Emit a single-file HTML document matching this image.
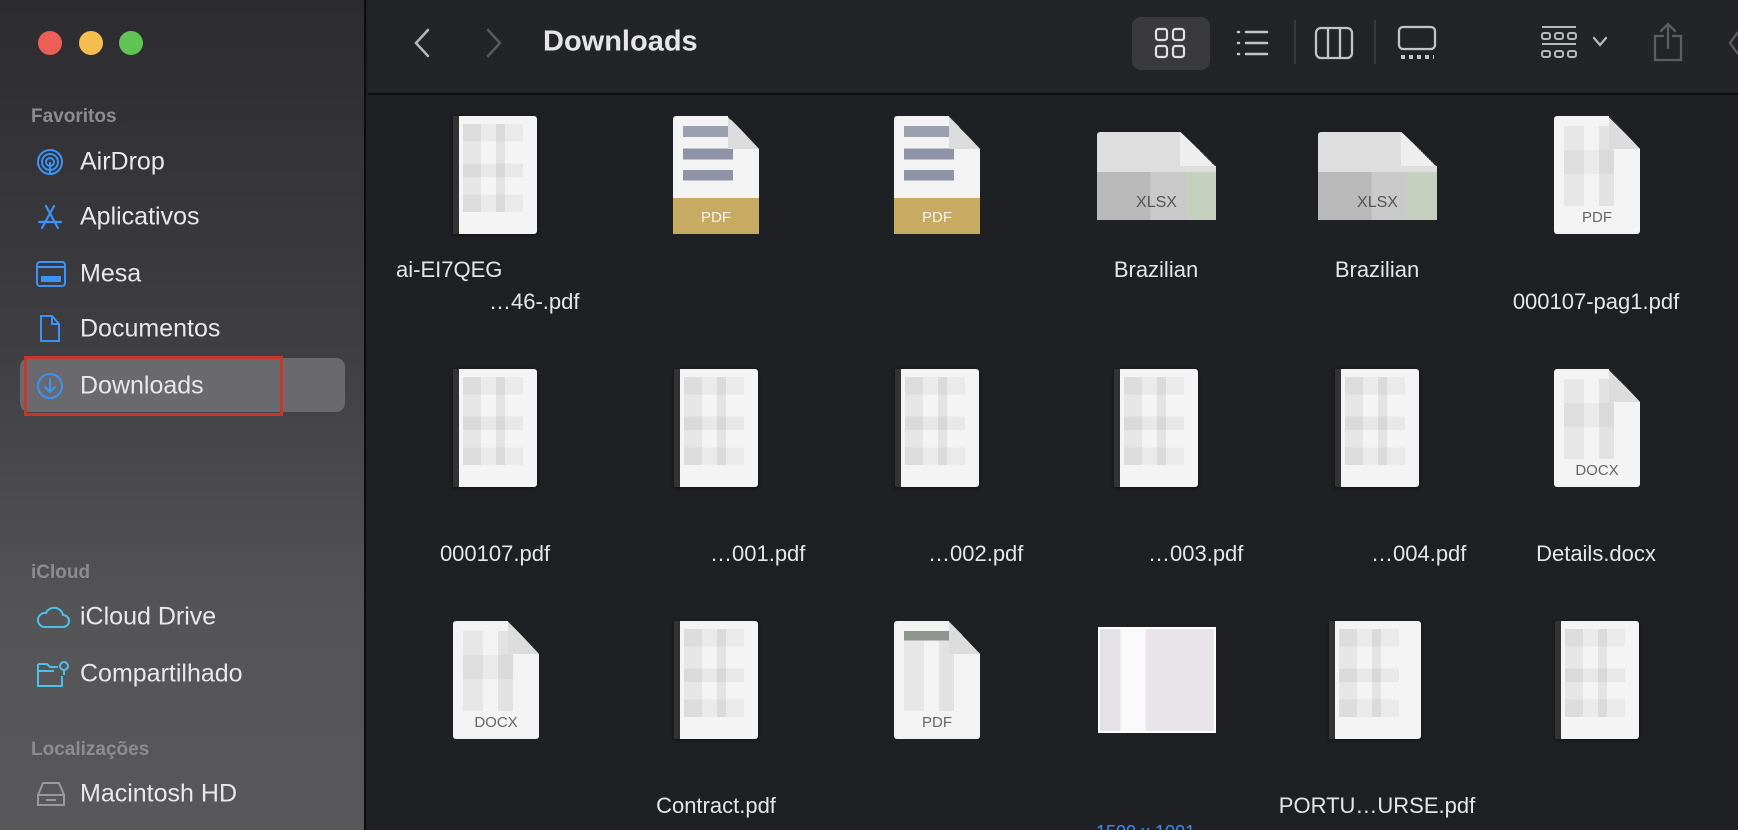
<!DOCTYPE html>
<html><head><meta charset="utf-8"><style>
*{margin:0;padding:0;box-sizing:border-box}
html,body{width:1738px;height:830px;overflow:hidden}
body{background:#1f2024;font-family:"Liberation Sans",sans-serif;position:relative}
#w{position:absolute;left:0;top:0;width:1738px;height:830px;overflow:hidden}
.sb{position:absolute;left:0;top:0;width:366px;height:830px;background:linear-gradient(180deg,#2c2c30 0%,#3e3e42 40%,#555558 75%,#58585b 100%);border-right:2px solid #0c0c0e}
.tl{position:absolute;top:31px;width:24px;height:24px;border-radius:50%}
.sh{position:absolute;left:31px;font-size:19px;color:#8d8d91;font-weight:bold}
.it{position:absolute;left:80px;font-size:25px;color:#e8e8ea;transform:translateY(-50%)}
.ic{position:absolute;left:36px;transform:translateY(-50%)}
.tb{position:absolute;left:368px;top:0;right:0;height:95px;background:#232427;border-bottom:2px solid #0d0d0f}
.lbl{position:absolute;font-size:22px;color:#e6e6e8;white-space:nowrap;transform:translateY(-50%)}
.c{transform:translate(-50%,-50%)}
.book{position:absolute;width:84px;height:118px;background:#f4f4f4;border-left:6px solid #333;box-shadow:0 1px 3px rgba(0,0,0,.5);border-radius:0 3px 3px 0;overflow:hidden}
.book::before{content:"";position:absolute;left:4px;top:8px;width:60px;height:88px;background:
linear-gradient(90deg,rgba(0,0,0,.06) 0 30%,transparent 30% 55%,rgba(0,0,0,.07) 55% 70%,transparent 70%),
linear-gradient(180deg,rgba(0,0,0,.04) 0 20%,transparent 20% 45%,rgba(0,0,0,.05) 45% 60%,transparent 60% 80%,rgba(0,0,0,.04) 80%)}
.doc{position:absolute;width:86px;height:118px;background:#f3f3f3;clip-path:polygon(0 0,64% 0,100% 28%,100% 100%,0 100%);border-radius:3px}
.doc::after{content:"";position:absolute;right:0;top:0;width:31px;height:33px;background:linear-gradient(225deg,#1f2024 50%,#dcdcdc 50%)}
.doc .blk{position:absolute;left:10px;top:10px;width:50px;height:80px;background:
linear-gradient(90deg,rgba(0,0,0,.05) 0 40%,transparent 40% 70%,rgba(0,0,0,.07) 70%),
linear-gradient(180deg,transparent 0 30%,rgba(0,0,0,.04) 30% 60%,transparent 60%)}
.doc .t{position:absolute;left:0;right:0;bottom:8px;text-align:center;font-size:15px;color:#666}
.gold .band{position:absolute;left:0;right:0;bottom:0;height:36px;background:#c8ab62}
.gold .t{color:#f2f2f2;bottom:8px}
.gold .blk{background:linear-gradient(180deg,#9aa0ae 0 14%,transparent 14% 28%,#8e94a6 28% 42%,transparent 42% 55%,#8e94a6 55% 68%,transparent 68%)}
.xl{position:absolute;width:119px;height:88px;background:#dedede;clip-path:polygon(0 0,70% 0,100% 38%,100% 100%,0 100%);border-radius:3px}
.xl::before{content:"";position:absolute;left:0;right:0;top:45%;bottom:0;background:linear-gradient(90deg,#b9b9b9 0 45%,#c9c9c9 45% 75%,#c6d0bf 75%)}
.xl::after{content:"";position:absolute;right:0;top:0;width:36px;height:34px;background:linear-gradient(225deg,#1f2024 50%,#eeeeee 50%)}
.xl span{position:absolute;left:0;right:0;bottom:8px;text-align:center;font-size:16px;color:#555;z-index:2}
</style></head><body><div id="w">
<div class="sb">
<div class="tl" style="left:38px;background:#ec5f57"></div>
<div class="tl" style="left:79px;background:#f4bd4f"></div>
<div class="tl" style="left:119px;background:#5fc453"></div>
<div class="sh" style="top:106px">Favoritos</div>
<svg class="ic" style="top:162px" width="28" height="28" viewBox="0 0 28 28" fill="none" stroke="#3b93f5" stroke-width="2"><circle cx="14" cy="14" r="12"/><circle cx="14" cy="14" r="8"/><circle cx="14" cy="14" r="4"/><path d="M14 14v12"/></svg>
<div class="it" style="top:162px">AirDrop</div>
<svg class="ic" style="top:217px" width="28" height="28" viewBox="0 0 28 28" fill="none" stroke="#3b93f5" stroke-width="2.2" stroke-linecap="round"><path d="M10 3l12 22M18 3L6 25M3 19h22"/></svg>
<div class="it" style="top:217px">Aplicativos</div>
<svg class="ic" style="top:274px" width="30" height="26" viewBox="0 0 30 26" fill="none" stroke="#3b93f5" stroke-width="2"><rect x="1" y="1" width="28" height="24" rx="3"/><path d="M1 6h28"/><rect x="6" y="16" width="18" height="4" fill="#3b93f5"/></svg>
<div class="it" style="top:274px">Mesa</div>
<svg class="ic" style="top:329px" width="28" height="30" viewBox="0 0 28 30" fill="none" stroke="#3b93f5" stroke-width="2"><path d="M5 2h11l7 8v17H5z"/><path d="M16 2v8h7"/></svg>
<div class="it" style="top:329px">Documentos</div>
<div style="position:absolute;left:20px;top:358px;width:325px;height:54px;background:#6a6a6e;border-radius:9px"></div>
<div style="position:absolute;left:24px;top:356px;width:259px;height:60px;border:3px solid #c8352b"></div>
<svg class="ic" style="top:386px" width="28" height="28" viewBox="0 0 28 28" fill="none" stroke="#3b93f5" stroke-width="2" stroke-linecap="round"><circle cx="14" cy="14" r="12"/><path d="M14 7v13M9 15l5 5 5-5"/></svg>
<div class="it" style="top:386px">Downloads</div>
<div class="sh" style="top:562px">iCloud</div>
<svg class="ic" style="top:617px" width="34" height="24" viewBox="0 0 34 24" fill="none" stroke="#4cc0e8" stroke-width="2"><path d="M8 22h19a6 6 0 000-12 9 9 0 00-17-2A7 7 0 008 22z"/></svg>
<div class="it" style="top:617px">iCloud Drive</div>
<svg class="ic" style="top:674px" width="34" height="28" viewBox="0 0 34 28" fill="none" stroke="#4cc0e8" stroke-width="2"><path d="M2 4h9l3 3h8M2 4v22h24V16M2 11h16"/><circle cx="28" cy="6" r="4"/><path d="M28 10v5"/></svg>
<div class="it" style="top:674px">Compartilhado</div>
<div class="sh" style="top:739px">Localizações</div>
<svg class="ic" style="top:794px" width="30" height="26" viewBox="0 0 30 26" fill="none" stroke="#9a9a9e" stroke-width="2"><path d="M7 2h16l5 12v10H2V14z"/><path d="M2 14h26M10 19h10"/></svg>
<div class="it" style="top:794px">Macintosh HD</div>
</div>

<div class="tb">
<svg style="position:absolute;left:44px;top:28px" width="20" height="30" viewBox="0 0 20 30" fill="none" stroke="#b8b8bc" stroke-width="2.5" stroke-linecap="round"><path d="M16 2L4 15l12 13"/></svg>
<svg style="position:absolute;left:116px;top:28px" width="20" height="30" viewBox="0 0 20 30" fill="none" stroke="#5a5a5e" stroke-width="2.5" stroke-linecap="round"><path d="M4 2l12 13L4 28"/></svg>
<div style="position:absolute;left:175px;top:42px;transform:translateY(-50%);font-size:29px;font-weight:bold;color:#e6e6e8">Downloads</div>
<div style="position:absolute;left:764px;top:17px;width:78px;height:53px;background:#3a3a3e;border-radius:9px"></div>
<svg style="position:absolute;left:786px;top:27px" width="32" height="32" viewBox="0 0 32 32" fill="none" stroke="#e0e0e2" stroke-width="2.2"><rect x="2" y="2" width="11" height="11" rx="2.5"/><rect x="19" y="2" width="11" height="11" rx="2.5"/><rect x="2" y="19" width="11" height="11" rx="2.5"/><rect x="19" y="19" width="11" height="11" rx="2.5"/></svg>
<svg style="position:absolute;left:867px;top:28px" width="34" height="30" viewBox="0 0 34 30" fill="none" stroke="#c4c4c8" stroke-width="2.5" stroke-linecap="round"><path d="M11 4h21M11 15h21M11 26h21M3 4h1M3 15h1M3 26h1"/></svg>
<div style="position:absolute;left:926px;top:20px;width:2px;height:44px;background:#3a3a3e"></div>
<svg style="position:absolute;left:946px;top:25px" width="40" height="36" viewBox="0 0 40 36" fill="none" stroke="#c4c4c8" stroke-width="2.3"><rect x="2" y="3" width="36" height="30" rx="5"/><path d="M14 3v30M26 3v30"/></svg>
<div style="position:absolute;left:1006px;top:20px;width:2px;height:44px;background:#3a3a3e"></div>
<svg style="position:absolute;left:1029px;top:25px" width="40" height="36" viewBox="0 0 40 36" fill="none" stroke="#c4c4c8" stroke-width="2.3"><rect x="2" y="2" width="36" height="22" rx="4"/><path d="M4 32h4M12 32h4M20 32h4M28 32h4M36 32h1" stroke-width="4"/></svg>
<svg style="position:absolute;left:1172px;top:24px" width="38" height="38" viewBox="0 0 38 38" fill="none" stroke="#b8b8bc" stroke-width="2"><path d="M2 3h34M2 20h34"/><rect x="2" y="9" width="8" height="6" rx="2"/><rect x="15" y="9" width="8" height="6" rx="2"/><rect x="28" y="9" width="8" height="6" rx="2"/><rect x="2" y="27" width="8" height="6" rx="2"/><rect x="15" y="27" width="8" height="6" rx="2"/><rect x="28" y="27" width="8" height="6" rx="2"/></svg>
<svg style="position:absolute;left:1224px;top:36px" width="16" height="12" viewBox="0 0 16 12" fill="none" stroke="#b8b8bc" stroke-width="2.3" stroke-linecap="round"><path d="M2 2l6 7 6-7"/></svg>
<svg style="position:absolute;left:1284px;top:22px" width="32" height="40" viewBox="0 0 32 40" fill="none" stroke="#5e5e62" stroke-width="2.3" stroke-linecap="round"><path d="M11 14H3v24h26V14h-8M16 2v24M9 9l7-7 7 7"/></svg>
<svg style="position:absolute;left:1360px;top:28px" width="10" height="30" viewBox="0 0 10 30" fill="none" stroke="#5e5e62" stroke-width="2.3"><path d="M10 4L2 15l8 11"/></svg>
</div>

<div class="book" style="left:453px;top:116px"></div>
<div class="doc gold" style="left:673px;top:116px"><div class="blk"></div><div class="band"></div><div class="t">PDF</div></div>
<div class="doc gold" style="left:894px;top:116px"><div class="blk"></div><div class="band"></div><div class="t">PDF</div></div>
<div class="xl" style="left:1097px;top:132px"><span>XLSX</span></div>
<div class="xl" style="left:1318px;top:132px"><span>XLSX</span></div>
<div class="doc" style="left:1554px;top:116px"><div class="blk"></div><div class="t">PDF</div></div>
<div class="lbl" style="left:396px;top:270px">ai-EI7QEG</div>
<div class="lbl" style="left:489px;top:302px">…46-.pdf</div>
<div class="lbl c" style="left:1156px;top:270px">Brazilian</div>
<div class="lbl c" style="left:1377px;top:270px">Brazilian</div>
<div class="lbl c" style="left:1596px;top:302px">000107-pag1.pdf</div>
<div class="book" style="left:453px;top:369px"></div>
<div class="book" style="left:674px;top:369px"></div>
<div class="book" style="left:895px;top:369px"></div>
<div class="book" style="left:1114px;top:369px"></div>
<div class="book" style="left:1335px;top:369px"></div>
<div class="doc" style="left:1554px;top:369px"><div class="blk"></div><div class="t">DOCX</div></div>
<div class="lbl c" style="left:495px;top:554px">000107.pdf</div>
<div class="lbl" style="left:710px;top:554px">…001.pdf</div>
<div class="lbl" style="left:928px;top:554px">…002.pdf</div>
<div class="lbl" style="left:1148px;top:554px">…003.pdf</div>
<div class="lbl" style="left:1371px;top:554px">…004.pdf</div>
<div class="lbl c" style="left:1596px;top:554px">Details.docx</div>
<div class="doc" style="left:453px;top:621px"><div class="blk"></div><div class="t">DOCX</div></div>
<div class="book" style="left:674px;top:621px"></div>
<div class="doc" style="left:894px;top:621px"><div class="blk" style="background:linear-gradient(180deg,#8e968e 0 12%,transparent 12%),linear-gradient(90deg,rgba(0,0,0,.05) 0 40%,transparent 40% 70%,rgba(0,0,0,.07) 70%)"></div><div class="t">PDF</div></div>
<div style="position:absolute;left:1098px;top:627px;width:118px;height:106px;background:linear-gradient(90deg,#e4e2e6 0 18%,#fafafa 18% 40%,#e8e4ea 40% 100%);border:2px solid #fff"></div>
<div class="book" style="left:1329px;top:621px;width:92px"></div>
<div class="book" style="left:1555px;top:621px"></div>
<div class="lbl c" style="left:716px;top:806px">Contract.pdf</div>
<div class="lbl c" style="left:1377px;top:806px">PORTU…URSE.pdf</div>
<div style="position:absolute;left:1096px;top:822px;font-size:18px;line-height:20px;color:#3b8cf0">1500 x 1001</div>
</div></body></html>
